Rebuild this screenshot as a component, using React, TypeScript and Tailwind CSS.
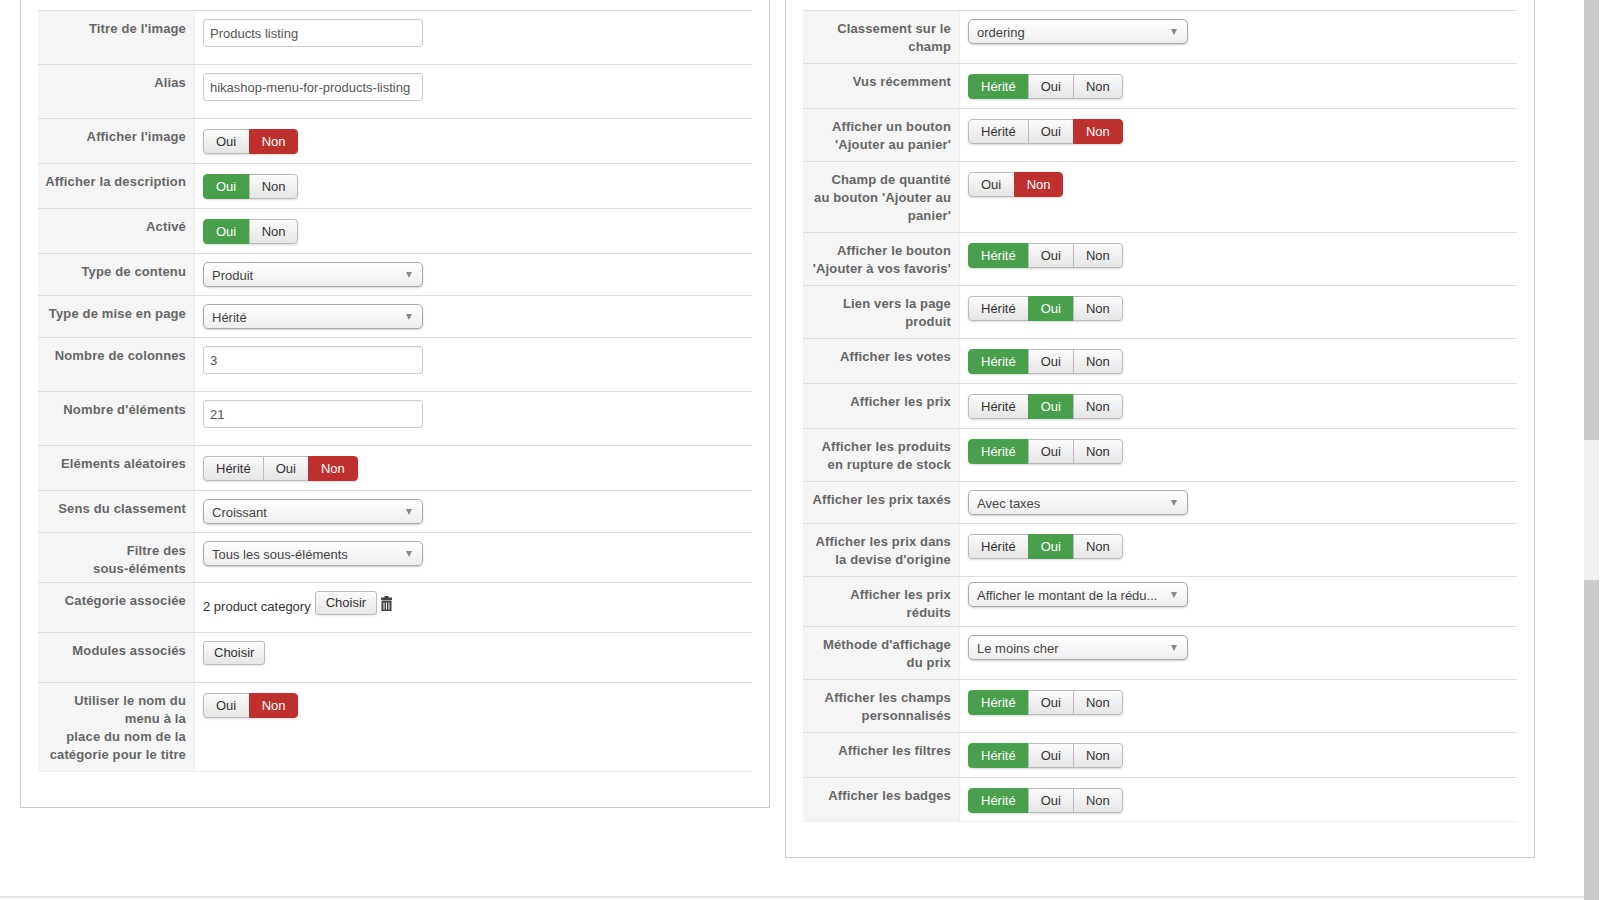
import React from 'react';

type Row = {
    label: string[];
    height: string;
    control: React.ReactNode;
};

const inputClass = "w-[220px] h-[28px] border border-[#cccccc] rounded-[3px] bg-white px-[6px] text-[13px] leading-[27px] text-[#555555] shadow-[inset_0_1px_1px_rgba(0,0,0,0.05)]";

const TextField = ({ value }: { value: string }) => (
    <div className={inputClass}>{value}</div>
);

const SelectField = ({ value, raised }: { value: string; raised?: boolean }) => (
    <div className={`${raised ? '-mt-[3px]' : ''} w-[220px] h-[25px] border border-[#aaaaaa] rounded-[5px] bg-gradient-to-b from-white to-[#eeeeee] pl-[8px] pr-[10px] flex items-center justify-between text-[13px] text-[#444444] shadow-[0_1px_2px_rgba(0,0,0,0.2)]`}>
        <span className="pt-[2px]">{value}</span>
        <span className="w-0 h-0 border-x-[3.5px] border-x-transparent border-t-[6px] border-t-[#888888]" />
    </div>
);

const Toggle = ({ options, active }: { options: string[]; active: string }) => (
    <div className="mt-[2px] flex h-[25px] rounded-[4px] shadow-[0_1px_2px_rgba(0,0,0,0.15)] w-fit">
        {options.map((option, i) => {
            const isActive = option === active;
            const activeColor = option === 'Non' ? 'bg-[#bd302d] border-[#bd302d] text-white' : 'bg-[#48a04c] border-[#48a04c] text-white';
            const idle = 'bg-gradient-to-b from-[#fbfbfb] to-[#e6e6e6] border-[#bbbbbb] text-[#333333]';
            const twoOptions = options.length === 2;
            const padding = twoOptions ? (i === 0 ? 'pl-[12px] pr-[13px]' : 'px-[11.5px]') : 'px-[12px]';
            return (
                <div
                    key={option}
                    className={`${isActive ? activeColor : idle} ${padding} border flex items-center text-[13px] ${i === 0 ? 'rounded-l-[4px]' : '-ml-px'} ${i === options.length - 1 ? 'rounded-r-[4px]' : ''}`}
                >
                    {option}
                </div>
            );
        })}
    </div>
);

const ChoiceButton = () => (
    <div className="w-fit h-[24px] px-[10px] flex items-center border border-[#bbbbbb] rounded-[3px] bg-gradient-to-b from-[#fbfbfb] to-[#e6e6e6] text-[13px] text-[#333333] shadow-[0_1px_2px_rgba(0,0,0,0.1)]">
        Choisir
    </div>
);

const TrashIcon = () => (
    <svg width="11" height="15" viewBox="0 0 11 15" fill="#444444" className="block">
        <path d="M3.500 0h4v1.500H11v2.500H0V1.500h3.500z" />
        <path d="M.5 4.500h10V15H.5zM2.500 6.500v7h1v-7zM5 6.500v7h1v-7zM7.500 6.500v7h1v-7z" fillRule="evenodd" />
    </svg>
);

const H3 = ['Hérité', 'Oui', 'Non'];
const H2 = ['Oui', 'Non'];

const leftRows: Row[] = [
    { label: ["Titre de l'image"], height: 'h-[54px]', control: <TextField value="Products listing" /> },
    { label: ['Alias'], height: 'h-[54px]', control: <TextField value="hikashop-menu-for-products-listing" /> },
    { label: ["Afficher l'image"], height: 'h-[45px]', control: <Toggle options={H2} active="Non" /> },
    { label: ['Afficher la description'], height: 'h-[45px]', control: <Toggle options={H2} active="Oui" /> },
    { label: ['Activé'], height: 'h-[45px]', control: <Toggle options={H2} active="Oui" /> },
    { label: ['Type de contenu'], height: 'h-[42px]', control: <SelectField value="Produit" /> },
    { label: ['Type de mise en page'], height: 'h-[42px]', control: <SelectField value="Hérité" /> },
    { label: ['Nombre de colonnes'], height: 'h-[54px]', control: <TextField value="3" /> },
    { label: ["Nombre d'éléments"], height: 'h-[54px]', control: <TextField value="21" /> },
    { label: ['Eléments aléatoires'], height: 'h-[45px]', control: <Toggle options={H3} active="Non" /> },
    { label: ['Sens du classement'], height: 'h-[42px]', control: <SelectField value="Croissant" /> },
    { label: ['Filtre des', 'sous-éléments'], height: 'h-[50px]', control: <SelectField value="Tous les sous-éléments" /> },
    {
        label: ['Catégorie associée'],
        height: 'h-[50px]',
        control: (
            <div className="flex items-start text-[13px] text-[#333333]">
                <span className="mt-[6px] mr-[4px]">2 product category</span>
                <ChoiceButton />
                <span className="ml-[4px] mt-[5px]"><TrashIcon /></span>
            </div>
        ),
    },
    { label: ['Modules associés'], height: 'h-[50px]', control: <ChoiceButton /> },
    { label: ['Utiliser le nom du', 'menu à la', 'place du nom de la', 'catégorie pour le titre'], height: 'h-[89px]', control: <Toggle options={H2} active="Non" /> },
];

const rightRows: Row[] = [
    { label: ['Classement sur le', 'champ'], height: 'h-[53px]', control: <SelectField value="ordering" /> },
    { label: ['Vus récemment'], height: 'h-[45px]', control: <Toggle options={H3} active="Hérité" /> },
    { label: ['Afficher un bouton', "'Ajouter au panier'"], height: 'h-[53px]', control: <Toggle options={H3} active="Non" /> },
    { label: ['Champ de quantité', "au bouton 'Ajouter au", "panier'"], height: 'h-[71px]', control: <Toggle options={H2} active="Non" /> },
    { label: ['Afficher le bouton', "'Ajouter à vos favoris'"], height: 'h-[53px]', control: <Toggle options={H3} active="Hérité" /> },
    { label: ['Lien vers la page', 'produit'], height: 'h-[53px]', control: <Toggle options={H3} active="Oui" /> },
    { label: ['Afficher les votes'], height: 'h-[45px]', control: <Toggle options={H3} active="Hérité" /> },
    { label: ['Afficher les prix'], height: 'h-[45px]', control: <Toggle options={H3} active="Oui" /> },
    { label: ['Afficher les produits', 'en rupture de stock'], height: 'h-[53px]', control: <Toggle options={H3} active="Hérité" /> },
    { label: ['Afficher les prix taxés'], height: 'h-[42px]', control: <SelectField value="Avec taxes" /> },
    { label: ['Afficher les prix dans', "la devise d'origine"], height: 'h-[53px]', control: <Toggle options={H3} active="Oui" /> },
    { label: ['Afficher les prix', 'réduits'], height: 'h-[50px]', control: <SelectField raised value="Afficher le montant de la rédu..." /> },
    { label: ["Méthode d'affichage", 'du prix'], height: 'h-[53px]', control: <SelectField value="Le moins cher" /> },
    { label: ['Afficher les champs', 'personnalisés'], height: 'h-[53px]', control: <Toggle options={H3} active="Hérité" /> },
    { label: ['Afficher les filtres'], height: 'h-[45px]', control: <Toggle options={H3} active="Hérité" /> },
    { label: ['Afficher les badges'], height: 'h-[44px]', control: <Toggle options={H3} active="Hérité" /> },
];

const FormRows = ({ rows }: { rows: Row[] }) => (
    <div className="border-b border-b-[#eeeeee]">
        {rows.map((row) => (
            <div key={row.label.join(' ')} className={`${row.height} flex border-t border-[#dddddd]`}>
                <div className="w-[157px] shrink-0 bg-[#f5f5f5] border-r border-[#eeeeee] pt-[9px] pr-[8px] text-right text-[13px] leading-[18px] font-bold tracking-[0.15px] text-[#666666]">
                    {row.label.map((line) => (
                        <div key={line}>{line}</div>
                    ))}
                </div>
                <div className="pl-[8px] pt-[8px]">{row.control}</div>
            </div>
        ))}
    </div>
);

export default function App() {
    return (
        <div className="h-[900px] overflow-hidden bg-white flex font-['Liberation_Sans',Arial,sans-serif]">
            <div className="flex-1 min-w-0 flex flex-col">
                <div className="h-[898px] border-b-2 border-[#e5e5e5] flex items-start pl-[20px] gap-[15px]">
                    <div className="w-[750px] h-[808px] border-l border-r border-b border-[#cccccc] pt-[10px] px-[17px]">
                        <FormRows rows={leftRows} />
                    </div>
                    <div className="w-[750px] h-[858px] border-l border-r border-b border-[#cccccc] pt-[10px] px-[17px]">
                        <FormRows rows={rightRows} />
                    </div>
                </div>
            </div>
            <div className="w-[16px] shrink-0 pr-px flex flex-col">
                <div className="h-[440px] bg-[#cacaca]" />
                <div className="h-[140px] bg-[#f0f0f0]" />
                <div className="flex-1 bg-[#cacaca]" />
            </div>
        </div>
    );
}
